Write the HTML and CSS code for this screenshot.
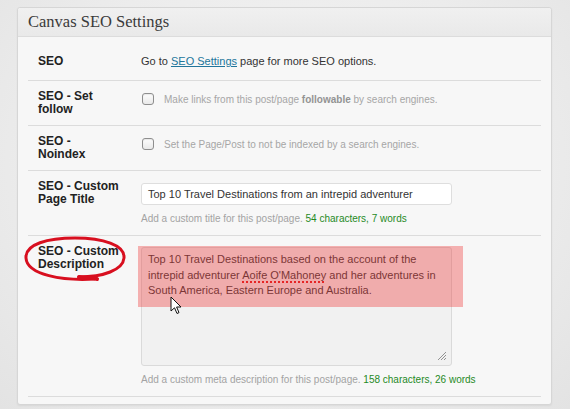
FILE: index.html
```html
<!DOCTYPE html>
<html>
<head>
<meta charset="utf-8">
<link rel="stylesheet" href="styles.css">
</head>
<body>
<div class="panel">
  <div class="panel-header"><h2 class="panel-title">Canvas SEO Settings</h2></div>
  <div class="rows">
    <div class="row row-first">
      <div class="label">SEO</div>
      <div class="field"><div class="plain">Go to <a class="link" href="#">SEO Settings</a> page for more SEO options.</div></div>
    </div>
    <div class="row">
      <div class="label">SEO - Set<br>follow</div>
      <div class="field"><div class="check-line"><span class="checkbox"></span><span class="check-text">Make links from this post/page <b>followable</b> by search engines.</span></div></div>
    </div>
    <div class="row">
      <div class="label">SEO -<br>Noindex</div>
      <div class="field"><div class="check-line"><span class="checkbox"></span><span class="check-text">Set the Page/Post to not be indexed by a search engines.</span></div></div>
    </div>
    <div class="row">
      <div class="label">SEO - Custom<br>Page Title</div>
      <div class="field">
        <div class="input">Top 10 Travel Destinations from an intrepid adventurer</div>
        <div class="help">Add a custom title for this post/page. <span class="count">54 characters, 7 words</span></div>
      </div>
    </div>
    <div class="row row-last">
      <div class="label label-circled">SEO - Custom<br>Description
        <svg class="circle" width="106" height="48" viewBox="0 0 106 48">
          <path d="M72 44 C40 46, 4 40, 3 23 C2 9, 25 3, 52 3 C80 3, 102 10, 101 23 C100 35, 80 42, 56 42" fill="none" stroke="#d80f1f" stroke-width="3" stroke-linecap="round"/>
          <path d="M56 42 C64 43, 72 43, 74 44" fill="none" stroke="#d80f1f" stroke-width="4" stroke-linecap="round"/>
        </svg>
      </div>
      <div class="field">
        <div class="textarea-wrap">
          <div class="textarea">Top 10 Travel Destinations based on the account of the<br>intrepid adventurer <span class="misspelled">Aoife O'Mahoney</span> and her adventures in<br>South America, Eastern Europe and Australia.
            <svg class="grip" width="10" height="10" viewBox="0 0 10 10">
              <path d="M9 1 L1 9 M9 4 L4 9 M9 7 L7 9" stroke="#888" stroke-width="0.9"/>
            </svg>
          </div>
          <div class="highlight"></div>
          <svg class="cursor" width="13" height="20" viewBox="0 0 13 20">
            <path d="M1 1 L1 15 L4.5 11.8 L7 17.5 L9 16.6 L6.6 11 L11 11 Z" fill="#fff" stroke="#111" stroke-width="1" stroke-linejoin="round"/>
          </svg>
        </div>
        <div class="help">Add a custom meta description for this post/page. <span class="count">158 characters, 26 words</span></div>
      </div>
    </div>
  </div>
</div>
</body>
</html>
```
FILE: styles.css
```css
html, body {
  margin: 0;
  padding: 0;
}
body {
  width: 570px;
  height: 409px;
  overflow: hidden;
  background: radial-gradient(ellipse at 50% 40%, #f4f4f4 0%, #ececec 60%, #e3e3e3 100%);
  font-family: "Liberation Sans", Arial, sans-serif;
  color: #333;
  padding-top: 7px;
  box-sizing: border-box;
}
.panel {
  margin-left: 17px;
  width: 535px;
  box-sizing: border-box;
  border: 1px solid #d6d6d6;
  border-radius: 3px;
  background: #f7f7f7;
  box-shadow: 0 1px 2px rgba(0,0,0,0.06);
  padding-bottom: 7px;
}
.panel-header {
  height: 29px;
  box-sizing: border-box;
  border-bottom: 1px solid #dcdcdc;
  background: linear-gradient(#f0f0f0, #e9e9e9);
  border-radius: 3px 3px 0 0;
  padding-left: 10px;
}
.panel-title {
  margin: 0;
  font-family: "Liberation Serif", "Times New Roman", serif;
  font-weight: normal;
  font-size: 16.5px;
  line-height: 28px;
  color: #3a3a3a;
}
.rows {
  margin: 0 10px;
}
.row {
  display: flex;
  padding: 9px 0 9px;
  border-bottom: 1px solid #dcdcdc;
}
.row-first {
  padding: 18px 0 12px;
}
.label {
  flex: 0 0 103px;
  padding-left: 10px;
  font-size: 12px;
  font-weight: bold;
  line-height: 13px;
  color: #222;
  position: relative;
}
.field {
  flex: 1;
}
.plain {
  font-size: 11px;
  line-height: 13px;
}
.link {
  color: #21759b;
}
.check-line {
  display: flex;
  align-items: center;
  height: 16px;
  margin-top: 1px;
}
.checkbox {
  width: 10px;
  height: 10px;
  border: 1px solid #8e8e8e;
  border-radius: 3px;
  background: linear-gradient(#fdfdfd, #e9e9e9);
  margin-left: 1px;
  margin-right: 10px;
  box-shadow: inset 0 1px 1px rgba(0,0,0,0.08);
}
.check-text {
  font-size: 10px;
  color: #a6a6a6;
}
.check-text b {
  color: #939393;
}
.input {
  margin-top: 3px;
  width: 311px;
  height: 22px;
  box-sizing: border-box;
  border: 1px solid #dedede;
  border-radius: 3px;
  background: #fff;
  padding-left: 6px;
  font-size: 11px;
  line-height: 20px;
  color: #333;
}
.help {
  margin-top: 7px;
  font-size: 10px;
  line-height: 14px;
  color: #a3a3a3;
}
.count {
  color: #1f8a1f;
}
.textarea-wrap {
  position: relative;
  width: 311px;
  padding-top: 2px;
}
.textarea {
  position: relative;
  height: 119px;
  box-sizing: border-box;
  border: 1px solid #dadada;
  border-radius: 3px;
  background: #f1f1f1;
  padding: 4px 6px;
  font-size: 11px;
  line-height: 15.5px;
  color: #333;
}
.misspelled {
  text-decoration: underline dotted #e01818;
  text-decoration-thickness: 2px;
  text-underline-offset: 3px;
}
.grip {
  position: absolute;
  right: 4px;
  bottom: 4px;
}
.highlight {
  position: absolute;
  left: -3px;
  top: 1px;
  width: 325px;
  height: 61px;
  background: rgba(238, 60, 60, 0.38);
}
.cursor {
  position: absolute;
  left: 29px;
  top: 51px;
}
.circle {
  position: absolute;
  left: -5px;
  top: -10px;
}
```
